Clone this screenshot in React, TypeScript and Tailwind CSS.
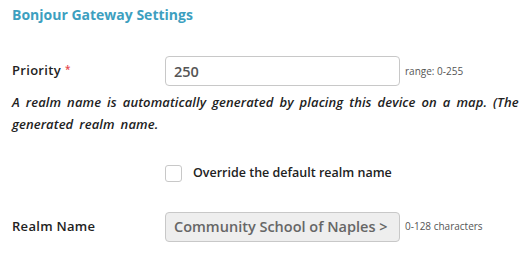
// Bonjour gateway settings panel: priority, realm name notice, override toggle.
import { useState } from 'react';

const FONT = { fontFamily: '"Open Sans", "Liberation Sans", sans-serif' };

function Row({ label, required, children }: { label: string; required?: boolean; children: React.ReactNode }) {
  return (
    <div className="flex items-center">
      <div className="flex w-[153px] shrink-0 items-center text-[13px] font-semibold tracking-[0.3px] text-[#222]">
        {label}
        {required ? <span className="ml-[4px] -mt-[3px] text-[10px] text-[#e5484d]">*</span> : null}
      </div>
      {children}
    </div>
  );
}

export default function App() {
  const [priority, setPriority] = useState('250');
  const [override, setOverride] = useState(false);

  return (
    <div className="h-[271px] w-[522px] overflow-hidden bg-white pl-3" style={FONT}>
      <h2 className="pt-[5px] text-[14px] font-bold leading-5 text-[#3d9fbf]">Bonjour Gateway Settings</h2>

      <div className="mt-[31px]">
        <Row label="Priority" required>
          <input
            value={priority}
            onChange={(e) => setPriority(e.target.value)}
            className="h-[30px] w-[235px] rounded border border-[#c8c8c8] px-2 text-[14.5px] font-semibold text-[#555] outline-none"
          />
          <span className="ml-[5px] text-[10px] text-[#555]">range: 0-255</span>
        </Row>
      </div>

      <p className="mt-[5px] whitespace-nowrap text-[13px] font-semibold italic leading-[22px] tracking-[0.1px] text-[#222] [word-spacing:2.5px]">
        <span className="block">A realm name is automatically generated by placing this device on a map. (The</span>
        <span className="block">generated realm name.</span>
      </p>

      <label className="ml-[153px] mt-[29px] flex cursor-pointer items-center">
        <input
          type="checkbox"
          checked={override}
          onChange={(e) => setOverride(e.target.checked)}
          className="h-[17px] w-[17px] appearance-none rounded-[3px] border border-[#c8c8c8] bg-white checked:bg-[#3d9fbf]"
        />
        <span className="ml-[11px] text-[12.5px] font-semibold text-[#222]">Override the default realm name</span>
      </label>

      <div className="mt-[29px]">
        <Row label="Realm Name">
          <div className="flex h-[30px] w-[235px] items-center rounded border border-[#c8c8c8] bg-[#eeeeee] px-2 text-[14.5px] font-semibold text-[#666]">
            Community School of Naples &gt;
          </div>
          <span className="ml-[5px] text-[10px] text-[#555]">0-128 characters</span>
        </Row>
      </div>
    </div>
  );
}
